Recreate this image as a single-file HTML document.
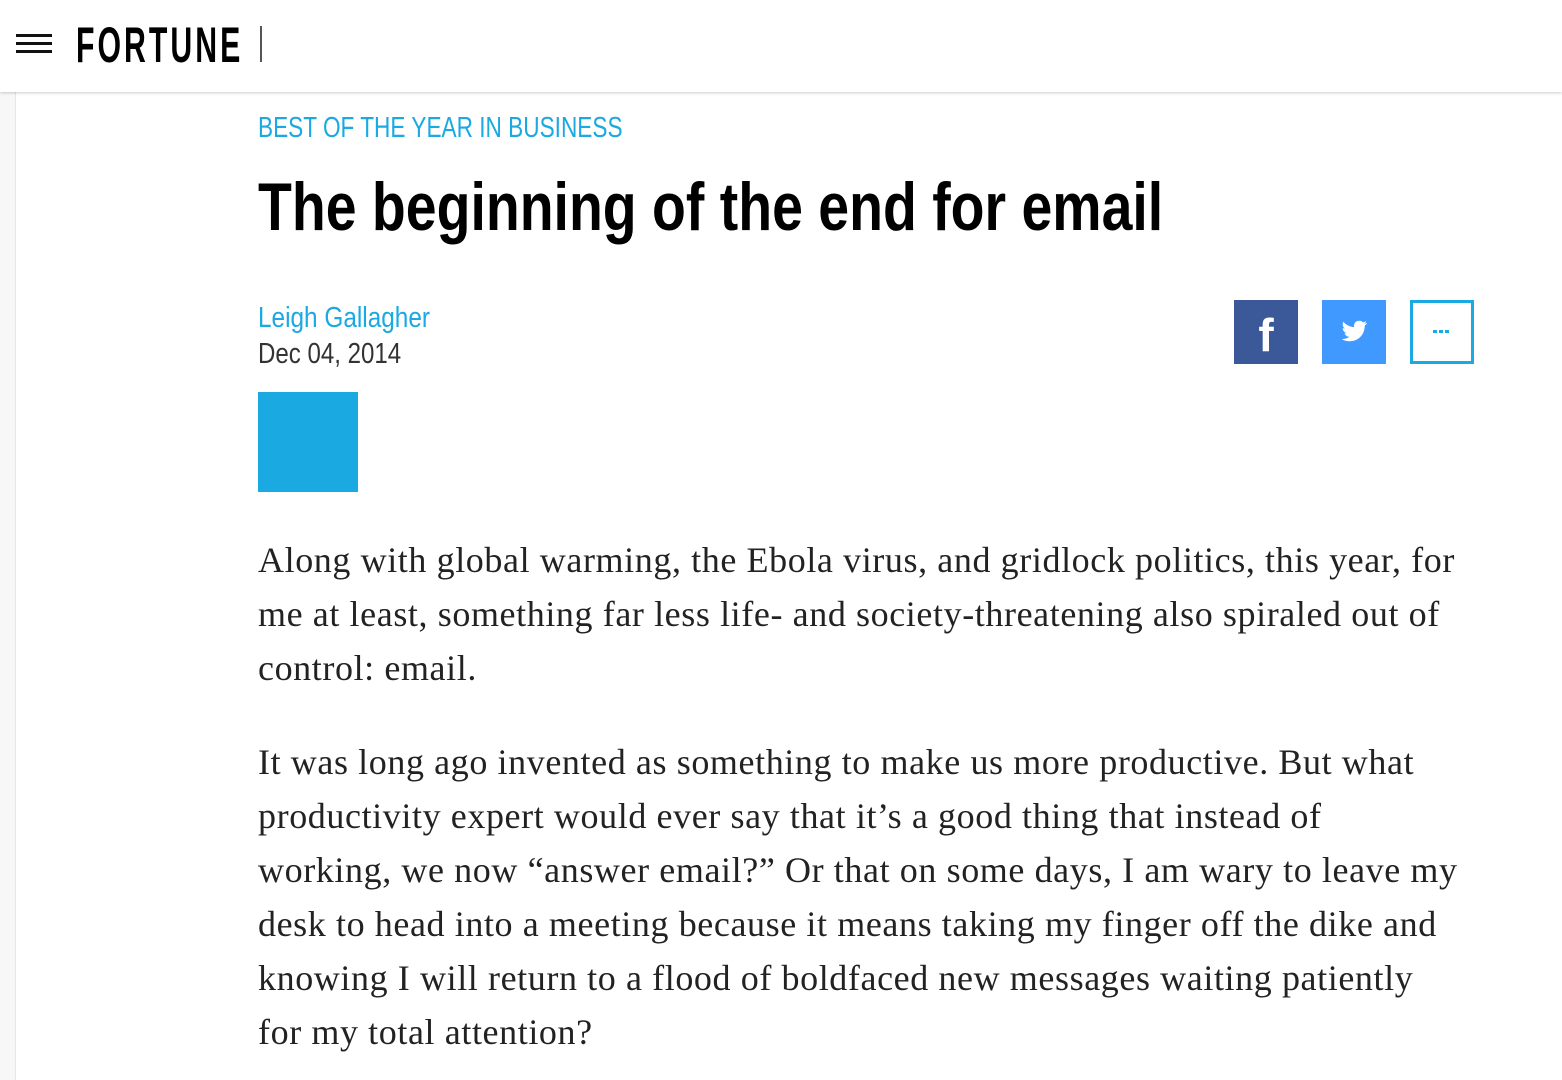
<!DOCTYPE html>
<html><head><meta charset="utf-8"><style>
body{margin:0;width:1562px;height:1080px;overflow:hidden;background:#fff;font-family:"Liberation Sans",sans-serif;position:relative}
.side{position:absolute;left:0;top:92px;width:15px;height:988px;background:#f7f7f7;border-right:1px solid #e6e6e6}
.hdr{position:absolute;left:0;top:0;width:1562px;height:92px;background:#fff;box-shadow:0 1px 3px rgba(0,0,0,.2);z-index:2}
.ham{position:absolute;left:16px;width:36px;height:3px;background:#111}
.logo{position:absolute;left:76px;top:20px;font:bold 50px "Liberation Sans",sans-serif;letter-spacing:5px;color:#000;transform:scaleX(.605);transform-origin:0 0;line-height:50px;white-space:nowrap}
.bar{position:absolute;left:260px;top:26px;width:2px;height:36px;background:#555}
.n{position:absolute;white-space:nowrap;transform-origin:0 0}
.kick{left:258px;top:112px;font-size:29px;color:#1aa9e1;transform:scaleX(.78)}
h1{margin:0;left:258px;top:168px;font-size:68px;font-weight:bold;color:#000;transform:scaleX(.815)}
.au{left:258px;top:302px;font-size:29px;color:#1aa9e1;transform:scaleX(.84)}
.dt{left:258px;top:338px;font-size:29px;color:#333;transform:scaleX(.83)}
.sq{position:absolute;left:258px;top:392px;width:100px;height:100px;background:#1aa9e1}
.btn{position:absolute;top:300px;width:64px;height:64px}
p{position:absolute;left:258px;margin:0;font:36px/54px "Liberation Serif",serif;letter-spacing:0.6px;color:#222;white-space:nowrap}
</style></head><body>
<div class="side"></div>
<div class="hdr">
<div class="ham" style="top:34px"></div><div class="ham" style="top:42px"></div><div class="ham" style="top:50px"></div>
<div class="logo">FORTUNE</div><div class="bar"></div>
</div>
<div class="n kick">BEST OF THE YEAR IN BUSINESS</div>
<h1 class="n">The beginning of the end for email</h1>
<div class="n au">Leigh Gallagher</div>
<div class="n dt">Dec 04, 2014</div>
<div class="btn" style="left:1234px;background:#3b5998"><div style="position:absolute;left:0;top:8px;width:64px;text-align:center;color:#fff;font:bold 46px 'Liberation Sans',sans-serif">f</div></div>
<div class="btn" style="left:1322px;background:#4099ff"><svg width="64" height="64" viewBox="0 0 64 64"><path fill="#fff" d="M45 23c-1 .5-2 .7-3 .9 1-.7 2-1.6 2.3-2.8-1 .6-2.1 1-3.3 1.3a5.2 5.2 0 0 0-8.9 4.7c-4.3-.2-8.1-2.300-10.700-5.400-1.400 2.400-.600 5.400 1.600 6.900-.800 0-1.600-.300-2.300-.600 0 2.500 1.800 4.700 4.200 5.100-.800.200-1.600.300-2.400.100.700 2.100 2.600 3.500 4.900 3.600-2.200 1.700-5 2.500-7.700 2.200 2.300 1.500 5.100 2.300 8 2.300 9.700 0 15-8 15-15v-.7c1-.7 1.900-1.600 2.600-2.600z"/></svg></div>
<div class="btn" style="left:1410px;box-sizing:border-box;border:3px solid #1aa9e1"><div style="position:absolute;left:20px;top:27px;width:4px;height:3px;background:#1aa9e1;box-shadow:6px 0 #1aa9e1,12px 0 #1aa9e1"></div></div>
<div class="sq"></div>
<p style="top:533px">Along with global warming, the Ebola virus, and gridlock politics, this year, for<br>me at least, something far less life- and society-threatening also spiraled out of<br>control: email.</p>
<p style="top:735px">It was long ago invented as something to make us more productive. But what<br>productivity expert would ever say that it’s a good thing that instead of<br>working, we now “answer email?” Or that on some days, I am wary to leave my<br>desk to head into a meeting because it means taking my finger off the dike and<br>knowing I will return to a flood of boldfaced new messages waiting patiently<br>for my total attention?</p>
</body></html>
